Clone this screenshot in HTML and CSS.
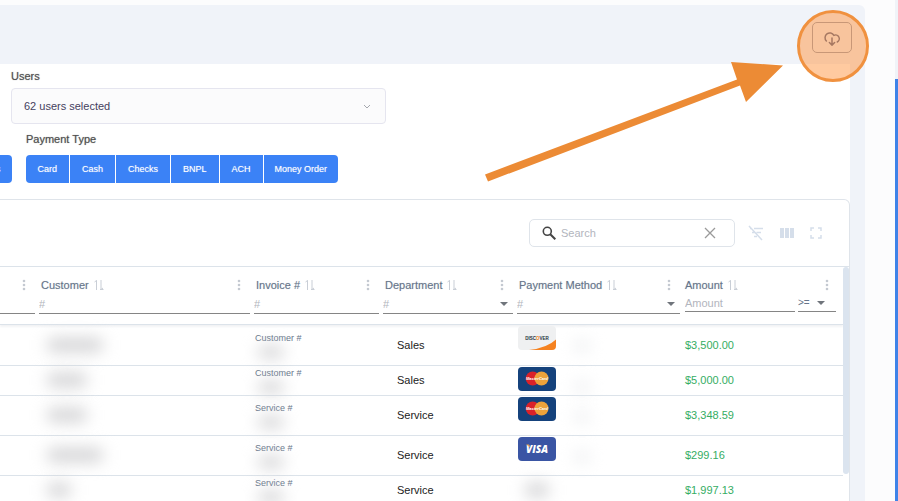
FILE: index.html
```
<!DOCTYPE html>
<html lang="en">
<head>
  <meta charset="UTF-8">
  <title>Payments</title>
  <link rel="stylesheet" href="styles.css">
</head>
<body>
  <svg class="sprite" aria-hidden="true">
    <symbol id="i-sort" viewBox="0 0 10 12">
      <path d="M2.500 11V1.500M.5 3L2.500 1.500V3M7 1V10.500M7 10.500L9 9M6 10.500H9.500" fill="none" stroke="currentColor"/>
    </symbol>
    <symbol id="i-dots" viewBox="0 0 4 12">
      <circle cx="2" cy="2" r="1.300"/><circle cx="2" cy="6" r="1.300"/><circle cx="2" cy="10" r="1.300"/>
    </symbol>
    <symbol id="i-caret" viewBox="0 0 8 4"><path d="M0 0h8L4 4z"/></symbol>
    <symbol id="i-mastercard" viewBox="0 0 38 24">
      <rect width="38" height="24" rx="4" fill="#15427c"/>
      <circle cx="14.700" cy="11.500" r="7" fill="#d9222a"/>
      <circle cx="23.500" cy="11.500" r="7" fill="#eda33b"/>
      <text x="19" y="13" text-anchor="middle" font-size="4" font-weight="bold" font-style="italic" fill="#fff">MasterCard</text>
    </symbol>
  </svg>

  <main class="shell">
    <header class="topbar">
      <button class="export-btn" aria-label="Export">
        <svg width="18" height="18" viewBox="0 0 24 24" fill="none" stroke="currentColor" stroke-width="2" stroke-linecap="round" stroke-linejoin="round">
          <path d="M4.500 16A6.300 6.300 0 1 1 14.500 8.500A4.800 4.800 0 0 1 19 17.300M12 12V21.500M8.500 18L12 21.500L15.500 18"/>
        </svg>
      </button>
    </header>

    <div class="content">
      <section class="filters">
        <label class="filter-label" for="users">Users</label>
        <div class="users-box">
          <select id="users"><option>62 users selected</option></select>
          <svg width="8" height="5" viewBox="0 0 8 5"><path d="M1 1l3 3 3-3" fill="none" stroke="#a5a8ae"/></svg>
        </div>
        <div class="filter-label payment-label" id="payment-type">Payment Type</div>
        <div class="btn-row">
          <div class="btn-group cut"><button>s</button></div>
          <div class="btn-group" role="group" aria-labelledby="payment-type">
            <button>Card</button>
            <button>Cash</button>
            <button>Checks</button>
            <button>BNPL</button>
            <button>ACH</button>
            <button>Money Order</button>
          </div>
        </div>
      </section>

      <section class="card">
        <div class="toolbar">
          <div class="search">
            <svg width="14" height="14" viewBox="0 0 14 14" fill="none" stroke="#444" stroke-width="1.600"><circle cx="5.300" cy="5.300" r="4"/><path d="M8.300 8.300l5 5" stroke-width="2"/></svg>
            <input type="text" placeholder="Search" aria-label="Search">
            <button class="icon-btn clear" aria-label="Clear search">
              <svg width="12" height="12" viewBox="0 0 12 12"><path d="M1 1l10 10M11 1L1 11" fill="none" stroke="currentColor" stroke-width="1.300"/></svg>
            </button>
          </div>
          <button class="icon-btn" aria-label="Toggle filters">
            <svg width="16" height="16" viewBox="0 0 16 16" fill="none" stroke="currentColor" stroke-width="1.500"><path d="M1 1l13 14M6 3.500h9M2 3.500h1M8.500 7.500h4.500M4 7.500h3M6 11.500h3"/></svg>
          </button>
          <button class="icon-btn" aria-label="Show columns">
            <svg width="14" height="10" viewBox="0 0 14 10" fill="currentColor"><path d="M0 0h4v10H0zM5 0h4v10H5zM10 0h4v10h-4z"/></svg>
          </button>
          <button class="icon-btn" aria-label="Full screen">
            <svg width="12" height="12" viewBox="0 0 12 12" fill="none" stroke="currentColor" stroke-width="1.500"><path d="M1 4V1h3M8 1h3v3M11 8v3H8M4 11H1V8"/></svg>
          </button>
        </div>

        <div class="table-wrap">
          <table>
            <colgroup>
              <col class="c-first"><col class="c-customer"><col class="c-invoice"><col class="c-dept"><col class="c-method"><col>
            </colgroup>
            <thead>
              <tr>
                <th class="first-head">
                  <div class="head"><svg class="dots"><use href="#i-dots"/></svg></div>
                  <div class="field"><input type="text" aria-label="Filter"></div>
                </th>
                <th>
                  <div class="head">Customer <svg class="sort"><use href="#i-sort"/></svg><svg class="dots"><use href="#i-dots"/></svg></div>
                  <div class="field"><input type="text" placeholder="#" aria-label="Filter by customer"></div>
                </th>
                <th>
                  <div class="head">Invoice # <svg class="sort"><use href="#i-sort"/></svg><svg class="dots"><use href="#i-dots"/></svg></div>
                  <div class="field"><input type="text" placeholder="#" aria-label="Filter by invoice"></div>
                </th>
                <th>
                  <div class="head">Department <svg class="sort"><use href="#i-sort"/></svg><svg class="dots"><use href="#i-dots"/></svg></div>
                  <div class="field"><select class="empty" aria-label="Filter by department"><option>#</option></select><svg class="caret"><use href="#i-caret"/></svg></div>
                </th>
                <th>
                  <div class="head">Payment Method <svg class="sort"><use href="#i-sort"/></svg><svg class="dots"><use href="#i-dots"/></svg></div>
                  <div class="field"><select class="empty" aria-label="Filter by payment method"><option>#</option></select><svg class="caret"><use href="#i-caret"/></svg></div>
                </th>
                <th class="amount-head">
                  <div class="head">Amount <svg class="sort"><use href="#i-sort"/></svg><svg class="dots"><use href="#i-dots"/></svg></div>
                  <div class="amount-filter">
                    <div class="field"><input type="text" placeholder="Amount" aria-label="Filter by amount"></div>
                    <div class="field operator"><select aria-label="Comparison"><option>&gt;=</option></select><svg class="caret"><use href="#i-caret"/></svg></div>
                  </div>
                </th>
              </tr>
            </thead>
            <tbody>
              <tr class="tall">
                <td></td>
                <td><span class="redacted long"></span></td>
                <td><span class="ref">Customer #</span><span class="redacted short"></span></td>
                <td class="dept">Sales</td>
                <td class="method">
                  <div class="pay">
                    <svg width="38" height="24" viewBox="0 0 38 24" role="img" aria-label="Discover">
                      <rect width="38" height="24" rx="4" fill="#eff0f1"/>
                      <path d="M11 24Q29 22 38 13.500V20a4 4 0 0 1-4 4z" fill="#f58220"/>
                      <text x="19" y="14" text-anchor="middle" font-size="4.500" font-weight="bold" fill="#26323e">DISC<tspan fill="#f58220">O</tspan>VER</text>
                    </svg>
                    <span class="redacted faint"></span>
                  </div>
                </td>
                <td class="amount">$3,500.00</td>
              </tr>
              <tr>
                <td></td>
                <td><span class="redacted mid"></span></td>
                <td><span class="ref">Customer #</span><span class="redacted short"></span></td>
                <td class="dept">Sales</td>
                <td class="method"><div class="pay"><svg width="38" height="24" role="img" aria-label="MasterCard"><use href="#i-mastercard"/></svg><span class="redacted faint"></span></div></td>
                <td class="amount">$5,000.00</td>
              </tr>
              <tr class="tall">
                <td></td>
                <td><span class="redacted mid"></span></td>
                <td><span class="ref">Service #</span><span class="redacted short"></span></td>
                <td class="dept">Service</td>
                <td class="method"><div class="pay"><svg width="38" height="24" role="img" aria-label="MasterCard"><use href="#i-mastercard"/></svg><span class="redacted faint"></span></div></td>
                <td class="amount">$3,348.59</td>
              </tr>
              <tr class="tall">
                <td></td>
                <td><span class="redacted long"></span></td>
                <td><span class="ref">Service #</span><span class="redacted short"></span></td>
                <td class="dept">Service</td>
                <td class="method">
                  <div class="pay">
                    <svg width="38" height="24" viewBox="0 0 38 24" role="img" aria-label="Visa">
                      <rect width="38" height="24" rx="4" fill="#3a55a4"/>
                      <text x="19" y="15.500" text-anchor="middle" font-family="Open Sans" font-size="10" font-weight="800" font-style="italic" fill="#fff">VISA</text>
                      <path d="M8 7.500h3l1.500 3z" fill="#e9a14a"/>
                    </svg>
                    <span class="redacted faint"></span>
                  </div>
                </td>
                <td class="amount">$299.16</td>
              </tr>
              <tr>
                <td></td>
                <td><span class="redacted tiny"></span></td>
                <td><span class="ref">Service #</span><span class="redacted short"></span></td>
                <td class="dept">Service</td>
                <td><span class="redacted tiny"></span></td>
                <td class="amount">$1,997.13</td>
              </tr>
            </tbody>
          </table>
          <div class="table-scroll"></div>
        </div>
      </section>
    </div>
  </main>
  <div class="page-scroll"></div>

  <!-- walkthrough pointer over the export button -->
  <div class="spotlight"></div>
  <svg class="arrow" width="298" height="120" viewBox="0 0 298 120" aria-hidden="true">
    <path d="M0 112.500L252 17.500 246 0 298 3.500 261 40 255 23.500 3 119.500z" fill="#ec8b35"/>
  </svg>
</body>
</html>
```

FILE: styles.css
```
* {
  box-sizing: border-box;
  margin: 0;
  padding: 0;
}

body {
  display: flex;
  position: relative;
  height: 100vh;
  overflow: hidden;
  font-family: "Liberation Sans", Arial, sans-serif;
  font-size: 11px;
  color: #66758a;
  background: #fcfcfd;
}

button, input, select {
  font: inherit;
  color: inherit;
  border: none;
  background: none;
  outline: none;
}

select {
  appearance: none;
}

button {
  cursor: pointer;
}

.sprite {
  display: none;
}

.shell {
  flex: 1;
  min-width: 0;
  margin-top: 5px;
  margin-right: 30px;
  padding-right: 15px;
  border-top-right-radius: 6px;
  background: #f0f3f9;
}

.topbar {
  display: flex;
  justify-content: flex-end;
  align-items: center;
  height: 59px;
  margin-right: -2px;
}

.export-btn {
  display: flex;
  align-items: center;
  justify-content: center;
  width: 40px;
  height: 31px;
  margin-top: 6px;
  border: 1px solid #9099ac;
  border-radius: 5px;
  color: #4d5a80;
}

.content {
  background: white;
}

/* filters */
.filters {
  padding: 4px 0 16px 11px;
}

.filter-label {
  display: block;
  line-height: 16px;
  color: #505050;
  text-shadow: 0 0 1px #909090;
}

.users-box {
  display: flex;
  align-items: center;
  width: 375px;
  height: 36px;
  margin-top: 4px;
  padding: 0 14px 0 12px;
  border: 1px solid #e5e5ef;
  border-radius: 4px;
  background: #fbfbfc;
}

.users-box select {
  flex: 1;
  height: 100%;
  color: #45415e;
}

.payment-label {
  margin: 7px 0 8px 15px;
}

.btn-row {
  display: flex;
  gap: 14px;
  margin-left: -11px;
}

.btn-group {
  display: flex;
  gap: 1px;
  border-radius: 4px;
  overflow: hidden;
}

.btn-group button {
  height: 28px;
  padding: 0 12px;
  font-size: 9px;
  color: white;
  text-shadow: 0 0 1px #a9c8fb;
  background: #3b82f6;
}

.btn-group button:last-child {
  padding: 0 11px;
}

.cut {
  margin-left: -15px;
}

/* table card */
.card {
  border: 1px solid #dfe4ea;
  border-left: none;
  border-top-right-radius: 6px;
}

.toolbar {
  display: flex;
  align-items: center;
  justify-content: flex-end;
  gap: 16px;
  height: 66px;
  padding: 0 27px 0 0;
  color: #d5deea;
}

.search {
  display: flex;
  align-items: center;
  gap: 5px;
  width: 206px;
  height: 28px;
  margin-right: -3px;
  padding: 0 18px 0 12px;
  border: 1px solid #dfe4ea;
  border-radius: 5px;
}

.search input {
  flex: 1;
  min-width: 0;
}

input::placeholder {
  color: #b2b5bd;
}

.icon-btn {
  display: flex;
}

.clear {
  color: #9a9a9a;
}

.table-wrap {
  display: flex;
  align-items: flex-start;
  border-top: 1px solid #dce3ea;
}

.table-scroll {
  flex: none;
  width: 6px;
  height: 207px;
  border-radius: 3px;
  background: #dbe4ef;
}

table {
  flex: 1;
  min-width: 0;
  table-layout: fixed;
  border-collapse: separate;
  border-spacing: 0;
}

.c-first { width: 37px; }
.c-customer { width: 215px; }
.c-invoice { width: 129px; }
.c-dept { width: 134px; }
.c-method { width: 167px; }

thead {
  box-shadow: 0 2px 2px #f2f3f5;
}

th {
  height: 58px;
  padding: 9px 2px 0;
  vertical-align: top;
  font-weight: normal;
  text-align: left;
  border-bottom: 1px solid #dce3ea;
}

.head {
  display: flex;
  align-items: center;
  gap: 5px;
  height: 18px;
  padding: 0 9px 0 2px;
  text-shadow: 0 0 1px #c3cad3;
}

.sort {
  width: 10px;
  height: 12px;
  color: #c9ced6;
}

.dots {
  width: 4px;
  height: 12px;
  margin-left: auto;
  fill: #c4c9d1;
}

.field {
  display: grid;
  align-items: center;
  height: 20px;
  border-bottom: 1px solid #858585;
}

.field input,
.field select {
  grid-area: 1 / 1;
  width: 100%;
}

.field .empty {
  color: #b2b5bd;
}

.caret {
  grid-area: 1 / 1;
  justify-self: end;
  width: 8px;
  height: 4px;
  margin-right: 5px;
  fill: #70757c;
  pointer-events: none;
}

.first-head {
  padding-left: 0;
}

.amount-head {
  padding: 9px 7px 0 3px;
}

.amount-head .head {
  padding: 0 7px 0 0;
}

.amount-filter {
  display: flex;
  gap: 3px;
}

.amount-filter .field {
  flex: 1;
  height: 18px;
}

.amount-filter .operator {
  flex: none;
  width: 38px;
  font-size: 10px;
}

.operator .caret {
  margin-right: 11px;
}

td {
  height: 30px;
  padding: 0 4px 1px;
  vertical-align: middle;
  border-bottom: 1px solid #dce3ea;
}

.tall td {
  height: 40px;
}

.tall:first-child td {
  height: 41px;
}

.ref {
  display: block;
  margin-left: -1px;
  font-size: 9px;
  line-height: 12px;
}

td.dept {
  padding-left: 16px;
  color: #1c1c1c;
}

td.method {
  padding: 1px 3px 0;
  vertical-align: top;
}

td.amount {
  padding-left: 3px;
  color: #35ad63;
}

.pay {
  display: flex;
  gap: 18px;
  height: 24px;
}

/* hidden customer details */
.redacted {
  display: block;
  height: 14px;
  margin-left: 6px;
  border-radius: 6px;
  background: #d2d2d4;
  filter: blur(8px);
}

.long { width: 56px; }
.mid { width: 40px; }
.tiny { width: 24px; }

.short {
  width: 26px;
  margin: 2px 0 0 2px;
  height: 12px;
}

.faint {
  width: 16px;
  margin: 16px 0 0 0;
  height: 8px;
  background: #e6e8eb;
}

.page-scroll {
  flex: none;
  width: 3px;
  border-top: 79px solid #f0f3f8;
  background: #3f83e8;
}

.spotlight {
  position: absolute;
  top: 10px;
  right: 29px;
  width: 72px;
  height: 72px;
  border: 3px solid #f0913f;
  border-radius: 50%;
  background: rgba(255, 150, 65, 0.5);
  pointer-events: none;
}

.arrow {
  position: absolute;
  top: 62px;
  right: 115px;
  pointer-events: none;
}
```
